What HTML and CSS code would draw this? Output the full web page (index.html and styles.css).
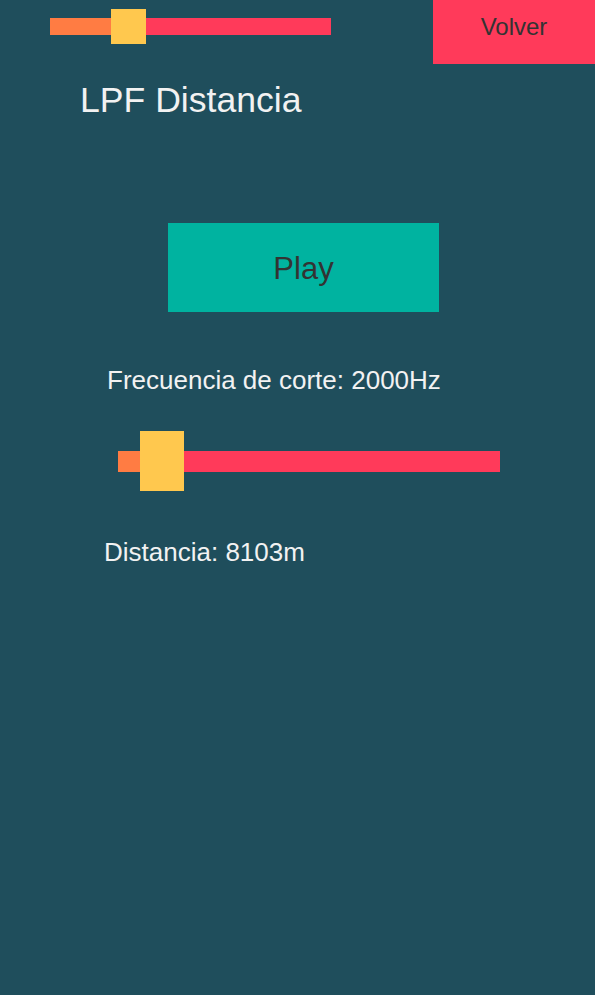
FILE: index.html
```html
<!DOCTYPE html>
<html lang="es">
<head>
<meta charset="utf-8">
<title>LPF Distancia</title>
<link rel="stylesheet" href="styles.css">
</head>
<body>
<div class="screen">
  <header class="top">
    <div class="slider slider-small">
      <div class="fill fill-small"></div>
      <div class="thumb thumb-small"></div>
      <div class="rest rest-small"></div>
    </div>
    <button class="back">Volver</button>
  </header>
  <h1 class="title">LPF Distancia</h1>
  <button class="play">Play</button>
  <p class="label label-freq">Frecuencia de corte: 2000Hz</p>
  <div class="slider slider-big">
    <div class="fill fill-big"></div>
    <div class="thumb thumb-big"></div>
    <div class="rest rest-big"></div>
  </div>
  <p class="label label-dist">Distancia: 8103m</p>
</div>
</body>
</html>
```
FILE: styles.css
```css
html, body {
  margin: 0;
  padding: 0;
  background: #1f4e5c;
}
.screen {
  width: 595px;
  height: 995px;
  background: #1f4e5c;
  font-family: "Liberation Sans", Arial, sans-serif;
  display: flex;
  flex-direction: column;
  align-items: flex-start;
}
.top {
  display: flex;
  align-items: flex-start;
  width: 100%;
  height: 64px;
}
.slider {
  display: flex;
  align-items: center;
}
.fill { background: #ff7c43; }
.rest { background: #ff3a5a; }
.thumb { background: #ffc84e; }
.slider-small {
  margin: 9px 0 0 50px;
  height: 35px;
}
.fill-small { width: 61px; height: 17px; }
.thumb-small { width: 35px; height: 35px; }
.rest-small { width: 185px; height: 17px; }
.back {
  margin-left: auto;
  width: 162px;
  height: 64px;
  border: 0;
  padding: 15px 0 0;
  background: #ff3a5a;
  color: #333333;
  font-family: inherit;
  font-size: 24px;
  line-height: 24px;
  display: flex;
  justify-content: center;
  align-items: flex-start;
}
.title {
  margin: 18px 0 0 80px;
  font-size: 35.6px;
  line-height: 36px;
  font-weight: normal;
  color: #f2f2f2;
}
.play {
  margin: 105px 0 0 168px;
  width: 271px;
  height: 89px;
  border: 0;
  padding: 2px 0 0;
  background: #00b3a0;
  color: #333333;
  font-family: inherit;
  font-size: 31px;
  line-height: 31px;
}
.label {
  font-size: 26px;
  line-height: 26px;
  color: #f2f2f2;
}
.label-freq { margin: 55px 0 0 107px; }
.slider-big {
  margin: 38px 0 0 118px;
  height: 60px;
}
.fill-big { width: 22px; height: 21px; }
.thumb-big { width: 44px; height: 60px; }
.rest-big { width: 316px; height: 21px; }
.label-dist { margin: 48px 0 0 104px; }
```
